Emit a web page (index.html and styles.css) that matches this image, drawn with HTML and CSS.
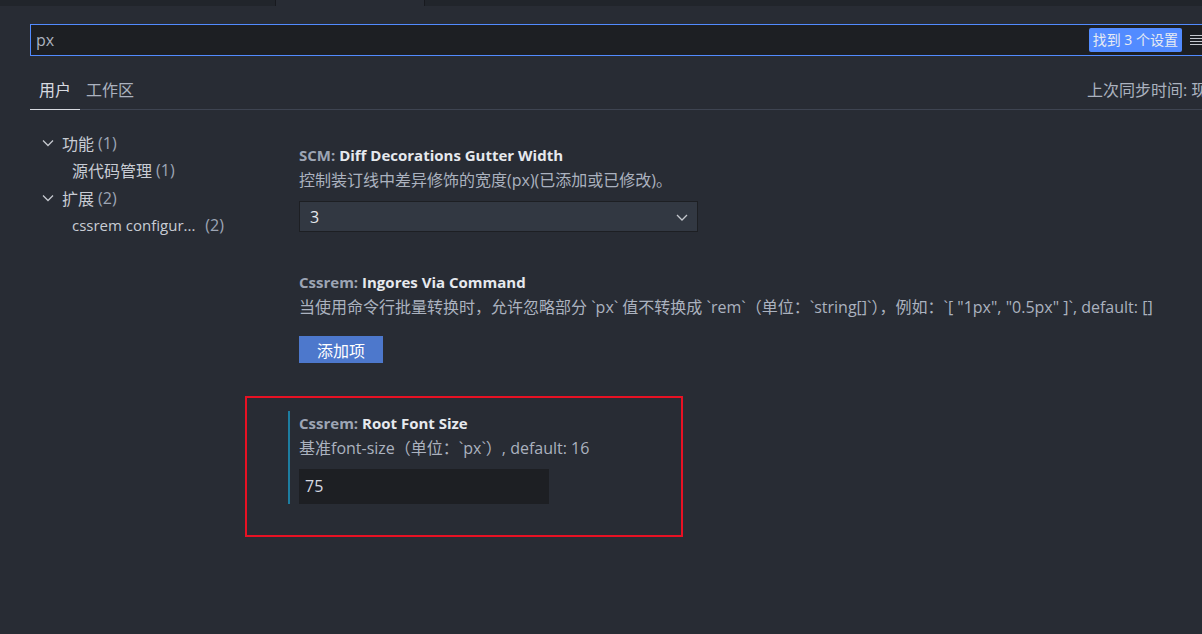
FILE: index.html
```html
<!DOCTYPE html>
<html>
  <head>
    <title>设置</title>
    <link rel="stylesheet" href="styles.css">
  </head>
  <body>
    <div class="tabstrip">
      <div class="tabstrip-gap"></div>
      <div class="tabstrip-active"></div>
      <div class="tabstrip-rest"></div>
    </div>

    <div class="search-row">
      <div class="search-box">
        <span class="search-text">px</span>
        <span class="search-badge">找到 3 个设置</span>
        <span class="search-menu">
          <svg width="12" height="12" viewBox="0 0 12 12">
            <path d="M0 1.5h12M0 4.5h12M0 7.5h12M0 10.5h12" stroke="#c5c8ce" stroke-width="1.2"/>
          </svg>
        </span>
      </div>
    </div>

    <div class="scope-tabs">
      <div class="scope-tab active">用户</div>
      <div class="scope-tab">工作区</div>
      <div class="scope-spacer"></div>
      <div class="sync-status">上次同步时间: 现</div>
    </div>

    <div class="main">
      <div class="toc">
        <div class="toc-row">
          <svg class="chevron" width="12" height="12" viewBox="0 0 12 12">
            <path d="M1 3.5l5 5 5-5" fill="none" stroke="#c5c8ce" stroke-width="1.3"/>
          </svg>
          <span class="toc-label">功能</span><span class="toc-count">(1)</span>
        </div>
        <div class="toc-row child">
          <span class="toc-label">源代码管理</span><span class="toc-count">(1)</span>
        </div>
        <div class="toc-row">
          <svg class="chevron" width="12" height="12" viewBox="0 0 12 12">
            <path d="M1 3.5l5 5 5-5" fill="none" stroke="#c5c8ce" stroke-width="1.3"/>
          </svg>
          <span class="toc-label">扩展</span><span class="toc-count">(2)</span>
        </div>
        <div class="toc-row child">
          <span class="toc-label latin">cssrem configur...</span><span class="toc-count wide">(2)</span>
        </div>
      </div>

      <div class="settings">
        <div class="setting">
          <div class="setting-title"><span class="setting-cat">SCM: </span>Diff Decorations Gutter Width</div>
          <div class="setting-desc">控制装订线中差异修饰的宽度(px)(已添加或已修改)。</div>
          <div class="select-box">
            <span>3</span>
            <svg width="14" height="14" viewBox="0 0 14 14">
              <path d="M2 5l5 5 5-5" fill="none" stroke="#c5c8ce" stroke-width="1.3"/>
            </svg>
          </div>
        </div>

        <div class="setting">
          <div class="setting-title"><span class="setting-cat">Cssrem: </span>Ingores Via Command</div>
          <div class="setting-desc">当使用命令行批量转换时，允许忽略部分 `px` 值不转换成 `rem`（单位：`string[]`），例如：`[ "1px", "0.5px" ]`, default: []</div>
          <button class="add-button">添加项</button>
        </div>

        <div class="highlight">
          <div class="setting modified">
            <div class="setting-title"><span class="setting-cat">Cssrem: </span>Root Font Size</div>
            <div class="setting-desc">基准font-size（单位：`px`）, default: 16</div>
            <div class="text-input">75</div>
          </div>
        </div>
      </div>
    </div>
  </body>
</html>
```

FILE: styles.css
```css
html, body {
  margin: 0;
  height: 100%;
}

body {
  background-color: #282c34;
  color: #d7dae0;
  font-family: "Open Sans", "Noto Sans CJK SC", sans-serif;
  font-size: 16px;
  overflow: hidden;
}

.tabstrip {
  display: flex;
  height: 6px;
}

.tabstrip-gap,
.tabstrip-rest {
  background-color: #21252b;
}

.tabstrip-gap {
  width: 275px;
  border-right: 1px solid #181a1f;
}

.tabstrip-active {
  width: 148px;
}

.tabstrip-rest {
  flex: 1;
  border-left: 1px solid #181a1f;
}

.search-row {
  padding: 18px 0 0 30px;
}

.search-box {
  display: flex;
  align-items: center;
  width: 1194px;
  height: 30px;
  border: 1px solid #528bff;
  background-color: #1d1f23;
  padding-left: 5px;
}

.search-text {
  flex: 1;
  color: #abb2bf;
}

.search-badge {
  background-color: #528bff;
  color: #e8ecf2;
  font-size: 14px;
  border-radius: 2px;
  height: 24px;
  line-height: 24px;
  padding: 0 4px;
}

.search-menu {
  display: flex;
  margin-left: 8px;
  width: 40px;
}

.scope-tabs {
  display: flex;
  align-items: flex-end;
  margin: 18px 0 0 30px;
  height: 35px;
  border-bottom: 1px solid #3e4451;
}

.scope-tab {
  padding: 0 9px 8px 6px;
  color: #abb2bf;
  margin-bottom: -1px;
  border-bottom: 1px solid transparent;
}

.scope-tab.active {
  color: #d7dae0;
  border-bottom-color: #d7dae0;
  padding-left: 9px;
}

.scope-spacer {
  flex: 1;
}

.sync-status {
  color: #abb2bf;
  padding-bottom: 8px;
  white-space: nowrap;
  width: 115px;
  overflow: hidden;
}

.main {
  display: flex;
}

.toc {
  width: 254px;
  padding: 19px 0 0 34px;
  flex-shrink: 0;
}

.toc-row {
  display: flex;
  align-items: center;
  height: 27.5px;
  white-space: pre;
}

.toc-row.child {
  padding-left: 38px;
}

.chevron {
  margin: 0 8px 0 8px;
}

.toc-label {
  color: #c8ccd4;
}

.toc-label.latin {
  font-size: 15px;
}

.toc-count {
  color: #9da5b4;
  margin-left: 4px;
}

.toc-count.wide {
  margin-left: 10px;
}

.settings {
  flex: 1;
  padding-top: 33px;
}

.setting {
  padding-left: 11px;
}

.setting-title {
  font-weight: bold;
  font-size: 15px;
  color: #e6e9ee;
  line-height: 24px;
}

.setting-cat {
  color: #9da5b4;
}

.setting-desc {
  color: #abb2bf;
  line-height: 26px;
  white-space: nowrap;
}

.select-box {
  display: flex;
  align-items: center;
  justify-content: space-between;
  width: 379px;
  height: 29px;
  margin-top: 8px;
  padding: 0 8px 0 10px;
  background-color: #323842;
  border: 1px solid #1d1f23;
  color: #e6e9ee;
}

.setting + .setting {
  margin-top: 38px;
}

.add-button {
  display: block;
  margin-top: 16px;
  width: 84px;
  height: 27px;
  border: none;
  background-color: #4d78cc;
  color: #ffffff;
  font-family: inherit;
  font-size: 16px;
  padding: 0;
}

.highlight {
  margin: 33px 0 0 -43px;
  width: 438px;
  height: 141px;
  border: 2px solid #e81123;
  padding-top: 17px;
  padding-left: 41px;
  box-sizing: border-box;
}

.setting.modified {
  border-left: 2px solid #1d7da0;
  padding-left: 9px;
}

.setting.modified .setting-title {
  margin-top: -4px;
}

.text-input {
  width: 244px;
  height: 35px;
  line-height: 35px;
  margin-top: 8px;
  padding-left: 6px;
  background-color: #1d1f23;
  color: #d7dae0;
}
```
